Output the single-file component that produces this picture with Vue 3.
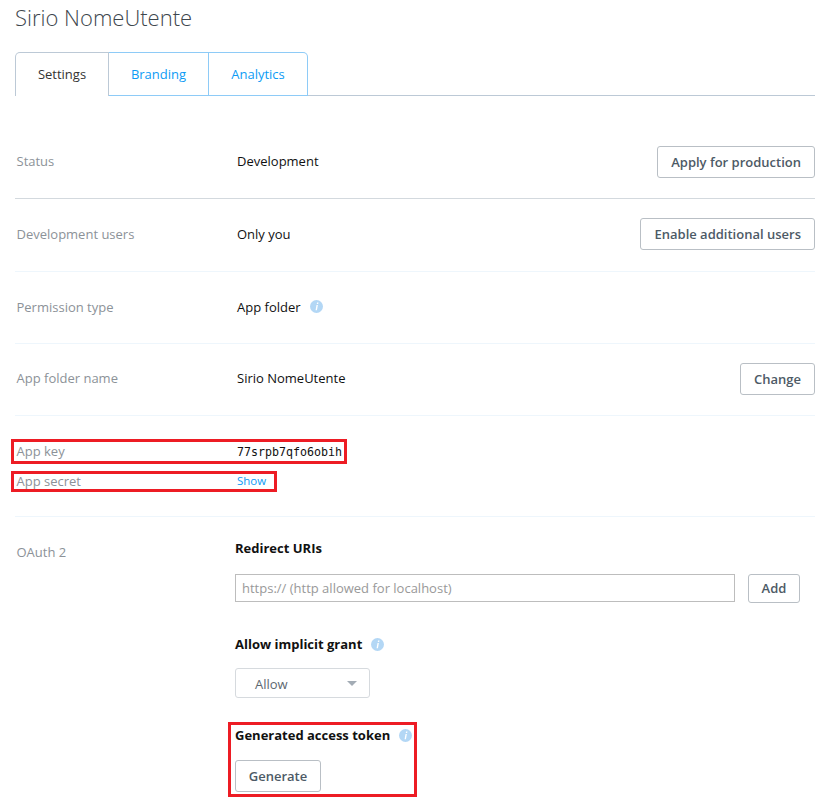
<template>
  <div class="page">
    <h1 class="title">Sirio NomeUtente</h1>

    <div class="tabs">
      <a v-for="tab in tabs" :key="tab" class="tab" :class="{ active: tab === 'Settings' }">{{ tab }}</a>
    </div>

    <div class="row first strong-line">
      <div class="label">Status</div>
      <div class="value">Development</div>
      <button class="btn">Apply for production</button>
    </div>

    <div class="row second">
      <div class="label">Development users</div>
      <div class="value">Only you</div>
      <button class="btn">Enable additional users</button>
    </div>

    <div class="row third">
      <div class="label">Permission type</div>
      <div class="value">
        App folder
        <svg class="info" viewBox="0 0 14 14"><circle cx="7" cy="7" r="7" fill="#b3d7f5" /><path d="M7.6 2.600h1.500l-.3 1.600H7.300zM7 5.400h1.500L7.500 11H6z" fill="#fff" /></svg>
      </div>
    </div>

    <div class="row folder">
      <div class="label">App folder name</div>
      <div class="value">Sirio NomeUtente</div>
      <button class="btn">Change</button>
    </div>

    <div class="keys">
      <div class="key-box key-one">
        <div class="label">App key</div>
        <code class="key">77srpb7qfo6obih</code>
      </div>
      <div class="key-box key-two">
        <div class="label">App secret</div>
        <a class="show">Show</a>
      </div>
    </div>

    <div class="oauth">
      <div class="label oauth-label">OAuth 2</div>
      <div class="oauth-body">
        <div class="heading">Redirect URIs</div>
        <div class="uri-row">
          <input class="uri" type="text" placeholder="https:// (http allowed for localhost)" />
          <button class="btn add">Add</button>
        </div>

        <div class="heading grant">
          Allow implicit grant
          <svg class="info" viewBox="0 0 14 14"><circle cx="7" cy="7" r="7" fill="#b3d7f5" /><path d="M7.6 2.600h1.500l-.3 1.600H7.300zM7 5.400h1.500L7.500 11H6z" fill="#fff" /></svg>
        </div>
        <div class="select">
          <span>Allow</span>
          <i class="caret"></i>
        </div>

        <div class="token-box">
          <div class="heading">
            Generated access token
            <svg class="info" viewBox="0 0 14 14"><circle cx="7" cy="7" r="7" fill="#b3d7f5" /><path d="M7.6 2.600h1.500l-.3 1.600H7.300zM7 5.400h1.500L7.500 11H6z" fill="#fff" /></svg>
          </div>
          <button class="btn generate">Generate</button>
        </div>
      </div>
    </div>
  </div>
</template>

<script setup>
const tabs = ['Settings', 'Branding', 'Analytics'];
</script>

<style scoped>
.page {
  width: 815px;
  height: 809px;
  padding-left: 15px;
  box-sizing: border-box;
  font-family: "Open Sans", sans-serif;
  font-size: 13px;
  color: #111;
  overflow: hidden;
}

.title {
  margin: 0;
  height: 52px;
  padding-top: 2px;
  box-sizing: border-box;
  font-size: 22px;
  line-height: 30px;
  font-weight: 300;
  color: #3d464d;
}

.tabs {
  display: flex;
  height: 44px;
  box-sizing: border-box;
  border-bottom: 1px solid #bcc9d6;
}

.tab {
  height: 44px;
  box-sizing: border-box;
  border: 1px solid #8ecbf7;
  border-left: 0;
  line-height: 42px;
  text-align: center;
  color: #0d9bf5;
  width: 100px;
}

.tab:last-child {
  width: 99px;
  border-top-right-radius: 5px;
}

.tab.active {
  width: 94px;
  color: #333;
  border-color: #bcc9d6;
  border-left: 1px solid #bcc9d6;
  border-bottom: 0;
  background: #fff;
  border-top-left-radius: 5px;
}

.row {
  display: flex;
  align-items: center;
  height: 72px;
  box-sizing: border-box;
  border-bottom: 1px solid #eef6fc;
}

.row.first {
  height: 103px;
  padding-top: 28px;
}

.row.first .btn {
  margin-top: 2px;
}

.row.second {
  height: 73px;
  padding-bottom: 2px;
}

.row.third {
  padding-bottom: 2px;
}

.row.folder {
  padding-bottom: 2px;
}

.row.folder .label,
.row.folder .value {
  margin-bottom: 2px;
}

.strong-line {
  border-bottom-color: #d3d9de;
}

.label {
  width: 222px;
  padding-left: 1.500px;
  box-sizing: border-box;
  color: #8c9298;
}

.value {
  flex: 1;
  display: flex;
  align-items: center;
  gap: 9px;
}

.info {
  width: 13px;
  height: 13px;
  flex: none;
}

.btn {
  height: 32px;
  padding: 0 13px;
  background: #fff;
  border: 1px solid #b9bfc5;
  border-radius: 3px;
  font-family: "Open Sans", sans-serif;
  font-size: 13px;
  font-weight: 600;
  color: #4d5a66;
}

.keys {
  height: 101px;
  padding-top: 23px;
  box-sizing: border-box;
  border-bottom: 1px solid #eef6fc;
}

.key-box {
  display: flex;
  align-items: center;
  box-sizing: border-box;
  border: 3px solid #ed1c24;
  margin-left: -4px;
  padding-left: 1px;
}

.key-box .label {
  margin-bottom: 2px;
}

.key-one {
  width: 336px;
  height: 25px;
}

.key-two {
  width: 266px;
  height: 21px;
  margin-top: 7px;
}

.key {
  font-family: "DejaVu Sans Mono", monospace;
  font-size: 11.630px;
  color: #111;
}

.show {
  font-size: 11.500px;
  color: #0d9bf5;
  margin-bottom: 2px;
}

.oauth {
  display: flex;
}

.oauth-label {
  width: 220px;
  padding-top: 26px;
}

.oauth-body {
  flex: 1;
  padding-top: 21px;
}

.heading {
  display: flex;
  align-items: center;
  gap: 9px;
  height: 20px;
  font-weight: 700;
  color: #111;
  white-space: nowrap;
}

.uri-row {
  display: flex;
  align-items: flex-start;
  gap: 13px;
  margin-top: 16px;
}

.uri {
  width: 500px;
  height: 28px;
  box-sizing: border-box;
  padding: 0 6px;
  border: 1px solid #bdbdbd;
  font-family: "Open Sans", sans-serif;
  font-size: 13px;
}

.uri::placeholder {
  color: #999;
}

.add {
  width: 52px;
  height: 29px;
  padding: 0 0 2px;
}

.grant {
  margin-top: 31px;
}

.select {
  display: flex;
  align-items: center;
  justify-content: space-between;
  width: 135px;
  height: 30px;
  margin-top: 14px;
  padding: 1px 12px 0 19px;
  box-sizing: border-box;
  border: 1px solid #d6dade;
  border-radius: 3px;
  color: #5d6770;
}

.caret {
  border-left: 5px solid transparent;
  border-right: 5px solid transparent;
  border-top: 5px solid #a3acb5;
}

.token-box {
  width: 189px;
  height: 75px;
  box-sizing: border-box;
  margin-top: 24px;
  margin-left: -7px;
  padding: 0 0 0 4px;
  border: 3px solid #ed1c24;
}

.generate {
  display: block;
  width: 86px;
  margin-top: 15px;
  padding: 0;
}
</style>
